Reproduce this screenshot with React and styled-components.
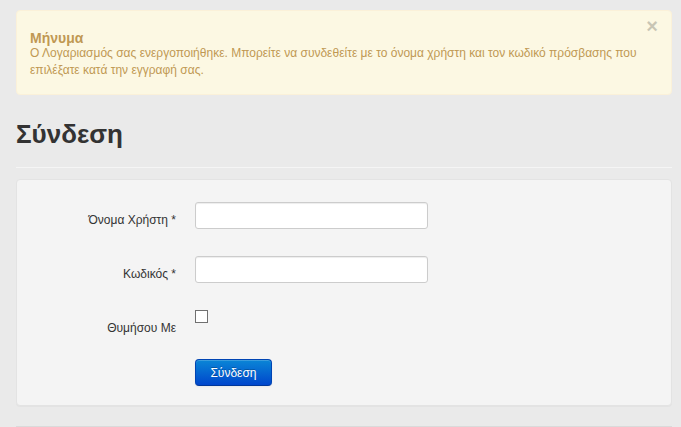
import React from 'react';
import styled, { createGlobalStyle } from 'styled-components';

const GlobalStyle = createGlobalStyle`
  html, body {
    margin: 0;
    padding: 0;
    background: #eaeaea;
    font-family: "Liberation Sans", Arial, sans-serif;
    font-size: 12px;
    color: #333;
  }
`;

const Page = styled.div`
  padding: 10px 9px 0 16px;
  overflow: hidden;
  height: 427px;
  box-sizing: border-box;
`;

const Alert = styled.div`
  position: relative;
  background: #fcf8e3;
  border: 1px solid #fbf1d9;
  border-radius: 4px;
  padding: 20px 18px 15px 13px;
  color: #c09853;
`;

const AlertTitle = styled.div`
  font-size: 14px;
  font-weight: bold;
  line-height: 14px;
`;

const AlertText = styled.div`
  line-height: 17px;
`;

const Close = styled.button`
  position: absolute;
  top: 5px;
  right: 13px;
  border: 0;
  background: none;
  padding: 0;
  font-family: "Liberation Sans", Arial, sans-serif;
  font-size: 20px;
  font-weight: bold;
  line-height: 20px;
  color: #000;
  opacity: 0.2;
  cursor: pointer;
`;

const Heading = styled.h1`
  margin: 0;
  padding: 21px 0 15px;
  font-size: 26px;
  line-height: 36px;
  font-weight: bold;
  color: #333;
  border-bottom: 1px solid #f5f5f5;
`;

const Panel = styled.form`
  margin-top: 11px;
  background: #f4f4f4;
  border: 1px solid #e3e3e3;
  border-radius: 4px;
  box-shadow: 0 1px 1px rgba(0, 0, 0, 0.03);
  padding: 22px 0 19px;
`;

const Row = styled.div`
  display: grid;
  grid-template-columns: 159px 1fr;
  column-gap: 19px;
  margin-bottom: ${(p) => p.$gap}px;
`;

const Label = styled.label`
  text-align: right;
  padding-top: 9px;
  line-height: 18px;
  color: #333;
`;

const Input = styled.input`
  box-sizing: border-box;
  width: 233px;
  height: 27px;
  background: #fff;
  border: 1px solid #ccc;
  border-radius: 3px;
  box-shadow: inset 0 1px 1px rgba(0, 0, 0, 0.075);
  padding: 4px 6px;
  font-family: inherit;
  font-size: 12px;
  outline: none;
`;

const Checkbox = styled.input`
  appearance: none;
  margin: 0;
  width: 13px;
  height: 13px;
  background: #fff;
  border: 1px solid #707070;
  box-sizing: border-box;
`;

const Button = styled.button`
  width: 77px;
  height: 27px;
  padding: 0;
  border: 1px solid #0044b3;
  border-bottom-color: #00379a;
  border-radius: 4px;
  background: linear-gradient(to bottom, #0a86d6, #0046cc);
  color: #fff;
  font-family: "Liberation Sans", Arial, sans-serif;
  font-size: 12px;
  text-shadow: 0 -1px 0 rgba(0, 0, 0, 0.25);
  box-shadow: inset 0 1px 0 rgba(255, 255, 255, 0.2), 0 1px 2px rgba(0, 0, 0, 0.05);
  cursor: pointer;
`;

const Footer = styled.div`
  margin-top: 20px;
  height: 20px;
  border-top: 1px solid #dadada;
  background: #ebebeb;
`;

export default function App() {
  return (
    <>
      <GlobalStyle />
      <Page>
        <Alert>
          <Close type="button">×</Close>
          <AlertTitle>Μήνυμα</AlertTitle>
          <AlertText>
            Ο Λογαριασμός σας ενεργοποιήθηκε. Μπορείτε να συνδεθείτε με το όνομα χρήστη και τον κωδικό πρόσβασης που
            επιλέξατε κατά την εγγραφή σας.
          </AlertText>
        </Alert>
        <Heading>Σύνδεση</Heading>
        <Panel onSubmit={(e) => e.preventDefault()}>
          <Row $gap={27}>
            <Label htmlFor="username">Όνομα Χρήστη *</Label>
            <div><Input id="username" type="text" /></div>
          </Row>
          <Row $gap={27}>
            <Label htmlFor="password">Κωδικός *</Label>
            <div><Input id="password" type="password" /></div>
          </Row>
          <Row $gap={22}>
            <Label htmlFor="remember">Θυμήσου Με</Label>
            <div><Checkbox id="remember" type="checkbox" /></div>
          </Row>
          <Row $gap={0}>
            <div />
            <div><Button type="submit">Σύνδεση</Button></div>
          </Row>
        </Panel>
        <Footer />
      </Page>
    </>
  );
}
